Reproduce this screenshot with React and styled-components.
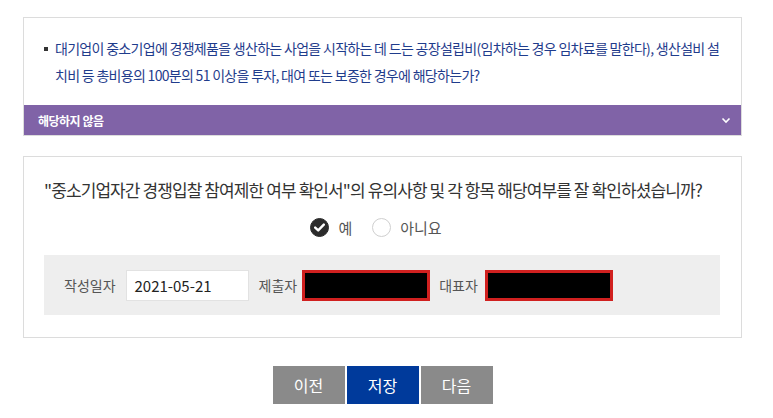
import styled, { createGlobalStyle } from "styled-components";
import { useState } from "react";

const GlobalStyle = createGlobalStyle`
  * { box-sizing: border-box; }
  body {
    margin: 0;
    background: #fff;
    font-family: "Noto Sans CJK KR", "Noto Sans", sans-serif;
  }
`;

const Page = styled.div`
  width: 773px;
  padding: 17px 31px 0 23px;
`;

const Card = styled.div`
  border: 1px solid #dcdcdc;
  background: #fff;
  margin-bottom: ${(props) => props.gap || 0}px;
`;

const Question = styled.div`
  display: flex;
  padding: 17px 20px 16px 20px;
`;

const Bullet = styled.span`
  flex-shrink: 0;
  width: 4px;
  height: 4px;
  background: #333;
  margin: 12px 7px 0 0;
`;

const QuestionText = styled.p`
  margin: 0;
  font-size: 14px;
  line-height: 27px;
  letter-spacing: -0.7px;
  color: #1f3c8c;
`;

const AnswerBar = styled.div`
  display: flex;
  align-items: center;
  justify-content: space-between;
  height: 30px;
  padding: 0 10px 0 14px;
  background: #8063a7;
  color: #fff;
  font-size: 12px;
  font-weight: 700;
  letter-spacing: -0.5px;
`;

const ConfirmBody = styled.div`
  padding: 20px 21px 22px 20px;
`;

const ConfirmTitle = styled.p`
  margin: 0;
  font-size: 17px;
  line-height: 26px;
  letter-spacing: -0.9px;
  color: #333;
`;

const RadioRow = styled.div`
  display: flex;
  justify-content: center;
  align-items: center;
  gap: 20px;
  height: 26px;
  margin: 11px 0 15px;
  padding-right: 12px;
`;

const RadioOption = styled.label`
  display: flex;
  align-items: center;
  gap: 9px;
  font-size: 15px;
  color: #555;
  cursor: pointer;
`;

const RadioCircle = styled.span`
  display: flex;
  align-items: center;
  justify-content: center;
  width: 19px;
  height: 19px;
  border-radius: 50%;
  background: ${(props) => (props.checked ? "#2b2b2b" : "#fff")};
  border: 1px solid ${(props) => (props.checked ? "#2b2b2b" : "#cfcfcf")};
`;

const InfoBox = styled.div`
  display: flex;
  align-items: center;
  height: 60px;
  padding: 0 20px;
  background: #eeeeee;
`;

const FieldLabel = styled.span`
  font-size: 14px;
  color: #555;
  margin-right: ${(props) => props.space}px;
`;

const DateInput = styled.div`
  display: flex;
  align-items: center;
  width: 123px;
  height: 31px;
  padding: 0 8px;
  background: #fff;
  border: 1px solid #e2e2e2;
  font-size: 15px;
  color: #222;
  margin-right: 10px;
`;

const MaskedInput = styled.div`
  width: 128px;
  height: 31px;
  background: #000;
  border: 3px solid #d0201f;
  margin-right: ${(props) => props.space || 0}px;
`;

const ButtonRow = styled.div`
  display: flex;
  justify-content: center;
  gap: 2px;
  margin-top: 28px;
`;

const NavButton = styled.button`
  width: 72px;
  height: 38px;
  border: none;
  border-radius: 0;
  background: ${(props) => (props.primary ? "#003a9b" : "#8a8a8a")};
  color: #fff;
  font-family: inherit;
  font-size: 16px;
  cursor: pointer;
`;

function Check() {
  return (
    <svg width="11" height="9" viewBox="0 0 11 9">
      <path d="M1.2 4.6 L4.2 7.4 L9.8 1.6" fill="none" stroke="#fff" strokeWidth="2.4" strokeLinecap="round" strokeLinejoin="round" />
    </svg>
  );
}

export default function App() {
  const [agree, setAgree] = useState(true);
  return (
    <Page>
      <GlobalStyle />
      <Card gap={20}>
        <Question>
          <Bullet />
          <QuestionText>
            대기업이 중소기업에 경쟁제품을 생산하는 사업을 시작하는 데 드는 공장설립비(임차하는 경우 임차료를 말한다), 생산설비 설
            <br />
            치비 등 총비용의 100분의 51 이상을 투자, 대여 또는 보증한 경우에 해당하는가?
          </QuestionText>
        </Question>
        <AnswerBar>
          <span>해당하지 않음</span>
          <svg width="10" height="7" viewBox="0 0 10 7">
            <path d="M1.5 1.5 L5 5 L8.5 1.5" fill="none" stroke="#fff" strokeWidth="1.6" />
          </svg>
        </AnswerBar>
      </Card>
      <Card>
        <ConfirmBody>
          <ConfirmTitle>
            "중소기업자간 경쟁입찰 참여제한 여부 확인서"의 유의사항 및 각 항목 해당여부를 잘 확인하셨습니까?
          </ConfirmTitle>
          <RadioRow>
            <RadioOption onClick={() => setAgree(true)}>
              <RadioCircle checked={agree}>{agree && <Check />}</RadioCircle>
              예
            </RadioOption>
            <RadioOption onClick={() => setAgree(false)}>
              <RadioCircle checked={!agree}>{!agree && <Check />}</RadioCircle>
              아니요
            </RadioOption>
          </RadioRow>
          <InfoBox>
            <FieldLabel space={10}>작성일자</FieldLabel>
            <DateInput>2021-05-21</DateInput>
            <FieldLabel space={5}>제출자</FieldLabel>
            <MaskedInput space={9} />
            <FieldLabel space={7}>대표자</FieldLabel>
            <MaskedInput />
          </InfoBox>
        </ConfirmBody>
      </Card>
      <ButtonRow>
        <NavButton>이전</NavButton>
        <NavButton primary>저장</NavButton>
        <NavButton>다음</NavButton>
      </ButtonRow>
    </Page>
  );
}
